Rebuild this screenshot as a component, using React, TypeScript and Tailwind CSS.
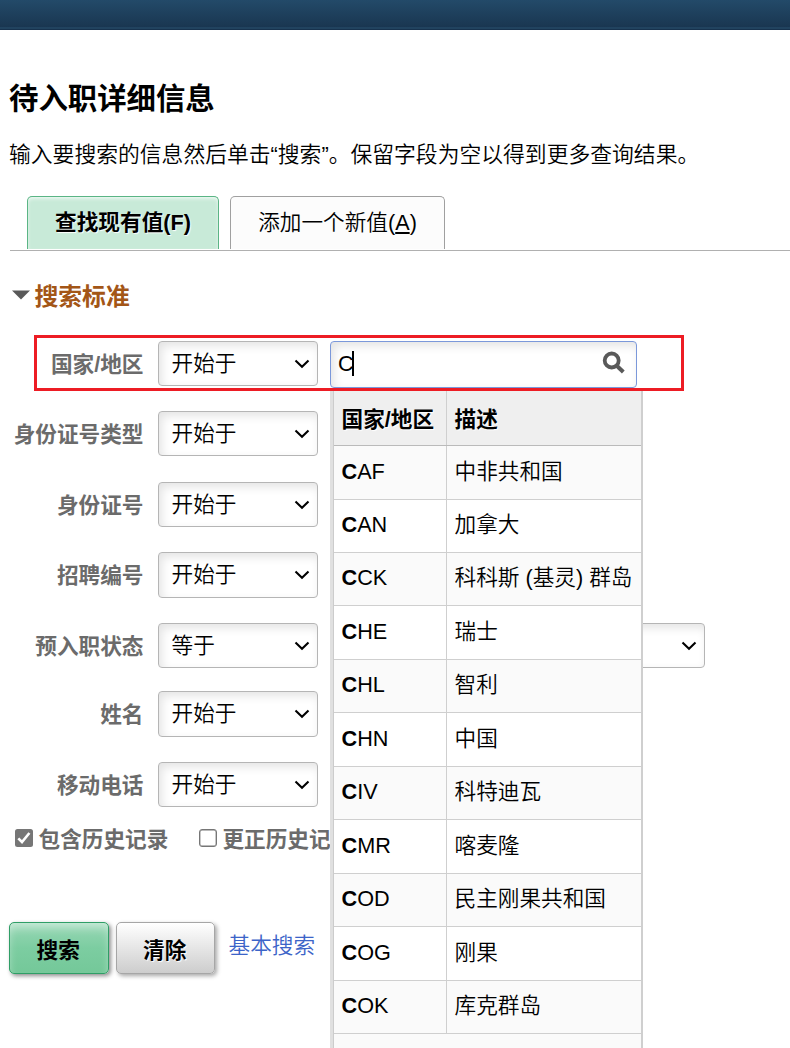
import React from "react";

const fontStack = "font-['Liberation_Sans','Noto_Sans_CJK_SC',sans-serif]";

const criteria = [
  { label: "国家/地区", op: "开始于", row: "h-[70px]", box: "h-[45px]" },
  { label: "身份证号类型", op: "开始于", row: "h-[71px]", box: "h-[45px]" },
  { label: "身份证号", op: "开始于", row: "h-[70px]", box: "h-[45px]" },
  { label: "招聘编号", op: "开始于", row: "h-[71px]", box: "h-[46px]" },
  { label: "预入职状态", op: "等于", row: "h-[68px]", box: "h-[45px]", status: true },
  { label: "姓名", op: "开始于", row: "h-[71px]", box: "h-[46px]" },
  { label: "移动电话", op: "开始于", row: "h-[67px]", box: "h-[45px]" },
];

const countries = [
  { code: "CAF", name: "中非共和国", h: "h-[54px]" },
  { code: "CAN", name: "加拿大", h: "h-[53px]" },
  { code: "CCK", name: "科科斯 (基灵) 群岛", h: "h-[53px]" },
  { code: "CHE", name: "瑞士", h: "h-[54px]" },
  { code: "CHL", name: "智利", h: "h-[53px]" },
  { code: "CHN", name: "中国", h: "h-[54px]" },
  { code: "CIV", name: "科特迪瓦", h: "h-[53px]" },
  { code: "CMR", name: "喀麦隆", h: "h-[54px]" },
  { code: "COD", name: "民主刚果共和国", h: "h-[53px]" },
  { code: "COG", name: "刚果", h: "h-[54px]" },
  { code: "COK", name: "库克群岛", h: "h-[53px]" },
];

function Chevron() {
  return (
    <svg width="16" height="10" viewBox="0 0 16 10" className="shrink-0">
      <path d="M1.5 1.5 L8 7.8 L14.5 1.5" fill="none" stroke="#000" strokeWidth="2.1" />
    </svg>
  );
}

function SelectBox({ text, size }: { text: string; size: string }) {
  return (
    <div
      className={`flex shrink-0 items-center justify-between rounded-[4px] border border-[#b5b5b5] bg-white pr-[7px] pl-[12.5px] shadow-[inset_3px_4px_10px_rgba(0,0,0,0.11)] ${size}`}
    >
      <span className="leading-8">{text}</span>
      <Chevron />
    </div>
  );
}

function LookupInput() {
  return (
    <div className="ml-3 flex h-[47px] w-[307px] shrink-0 items-center rounded-[4px] border border-[#7b98da] bg-white pr-[11px] pl-[7px] shadow-[inset_3px_4px_10px_rgba(0,0,0,0.11)]">
      <span className="-mt-0.5 w-[14px]">C</span>
      <span className="-mt-0.5 h-[25px] w-[2px] bg-black" />
      <svg width="23" height="23" viewBox="0 0 23 23" className="-mt-1 ml-auto">
        <circle cx="9.7" cy="9.5" r="7" fill="none" stroke="#595959" strokeWidth="3.8" />
        <path d="M14.5 14.5 L21.3 21" stroke="#595959" strokeWidth="4" />
      </svg>
    </div>
  );
}

function Checkbox({ checked }: { checked?: boolean }) {
  return checked ? (
    <svg width="18" height="18" viewBox="0 0 18 18" className="-mt-1 shrink-0">
      <rect width="18" height="18" rx="2.5" fill="#767676" />
      <path d="M3.3 9.3 L7 13 L14.4 4" fill="none" stroke="#fff" strokeWidth="2.6" />
    </svg>
  ) : (
    <span className="-mt-1 h-[18px] w-[18px] shrink-0 rounded-[3px] border border-[#767676] bg-white shadow-[inset_0_0_0_0.4px_#767676]" />
  );
}

function Suggestions() {
  return (
    <div className="absolute top-[388px] left-[330px] h-[660px] w-[313px] overflow-hidden border-l-[3px] border-[#e0e0e0]">
      <div className="h-full border-r-2 border-l border-r-[#cfcfcf] border-l-[#cccccc] bg-[#fafafa]">
        <div className="flex h-[58px] border-b border-[#bababa] bg-[#efefef] font-bold [text-shadow:1px_1px_1px_#fff]">
          <div className="flex w-[113px] shrink-0 items-center border-r border-[#cfcfcf] pt-[6px] pl-[7.5px]">国家/地区</div>
          <div className="flex flex-1 items-center pt-[6px] pl-[7.5px]">描述</div>
        </div>
        {countries.map((c, i) => (
          <div key={c.code} className={`flex border-b border-[#cfcfcf] ${c.h} ${i % 2 ? "bg-white" : "bg-[#fafafa]"}`}>
            <div className="flex w-[113px] shrink-0 items-center border-r border-[#cfcfcf] pb-0.5 pl-[7.5px]">
              <b className="font-bold">{c.code[0]}</b>
              {c.code.slice(1)}
            </div>
            <div className="flex flex-1 items-center pb-0.5 pl-[7.5px] whitespace-pre">{c.name}</div>
          </div>
        ))}
      </div>
    </div>
  );
}

export default function App() {
  return (
    <div className={`relative h-[1048px] w-[790px] overflow-hidden bg-white text-[21.65px] leading-8 font-[350] text-black ${fontStack}`}>
      <div className="h-[30px] border-b border-[#17324d] bg-linear-to-b from-[#234a69] to-[#19354f] shadow-[inset_0_-2px_0_#21435f]" />

      <h1 className="mt-[49px] ml-[9px] h-10 text-[29.4px] leading-10 font-bold">待入职详细信息</h1>
      <p className="mt-5 ml-[9px] h-8 text-[21.8px] whitespace-nowrap">输入要搜索的信息然后单击“搜索”。保留字段为空以得到更多查询结果。</p>

      <div className="mt-[25px] ml-[10px] flex h-[55px] gap-[11px] border-b border-[#b0b0b0] pb-px pl-[17px]">
        <div className="flex w-[192px] items-center justify-center rounded-t-[5px] border border-b-0 border-[#5bb585] bg-[#c8ead8] font-bold shadow-[inset_0_2px_4px_-1px_rgba(255,255,255,0.9)] [text-shadow:1px_1px_1px_#fff]">
          查找现有值(F)
        </div>
        <div className="flex w-[215px] items-center justify-center rounded-t-[5px] border border-b-0 border-[#a0a0a0] bg-[#fcfcfc]">
          <span>
            添加一个新值(<span className="underline decoration-2 underline-offset-2">A</span>)
          </span>
        </div>
      </div>

      <div className="mt-[30px] ml-[12px] flex h-8 items-center gap-[4.5px]">
        <svg width="18" height="10" viewBox="0 0 18 10" className="-mt-1">
          <path d="M0 0.5 H18 L9 9.5 Z" fill="#595959" />
        </svg>
        <h2 className="text-[23.8px] font-bold text-[#a35617]">搜索标准</h2>
      </div>

      <div className="mt-[28px]">
        {criteria.map((c) => (
          <div key={c.label} className={`flex items-start ${c.row}`}>
            <div className="mt-[8px] mr-[14.5px] w-[143.5px] shrink-0 text-right font-bold whitespace-nowrap text-[#6b6b6b]">{c.label}</div>
            <SelectBox text={c.op} size={`w-[160px] ${c.box}`} />
            {c.label === "国家/地区" && <LookupInput />}
            {c.status && (
              <div className="ml-3">
                <SelectBox text="" size="w-[375px] h-[45px]" />
              </div>
            )}
          </div>
        ))}
      </div>

      <div className="-mt-[5px] ml-[15px] flex h-8 items-center font-bold whitespace-nowrap text-[#6b6b6b]">
        <Checkbox checked />
        <span className="ml-[5.5px]">包含历史记录</span>
        <span className="ml-[30.6px] flex">
          <Checkbox />
        </span>
        <span className="ml-[5.5px]">更正历史记</span>
      </div>

      <div className="mt-[66px] ml-[9px] flex h-[52px]">
        <button className="w-[100px] rounded-[5px] border border-[#2f9e66] bg-linear-to-b from-[#98d7b5] via-[#7ccda1] to-[#74c899] pt-[5px] pr-[1.5px] font-bold shadow-[2px_2px_4px_rgba(0,0,0,0.45),inset_0_6px_10px_-2px_rgba(255,255,255,0.5)]">
          搜索
        </button>
        <button className="ml-[7px] w-[99px] rounded-[5px] border border-[#a6a6a6] bg-linear-to-b from-white to-[#cdcdcd] pt-[5px] pr-[1.5px] font-bold shadow-[2px_2px_4px_rgba(0,0,0,0.35)] [text-shadow:1px_1px_1px_#fff]">
          清除
        </button>
        <a className="mt-2 ml-[13.5px] text-[#3c64c8]">基本搜索</a>
      </div>

      <Suggestions />
      <div className="pointer-events-none absolute top-[335px] left-[34px] h-[56px] w-[650px] border-[3px] border-[#ed1c24]" />
    </div>
  );
}
